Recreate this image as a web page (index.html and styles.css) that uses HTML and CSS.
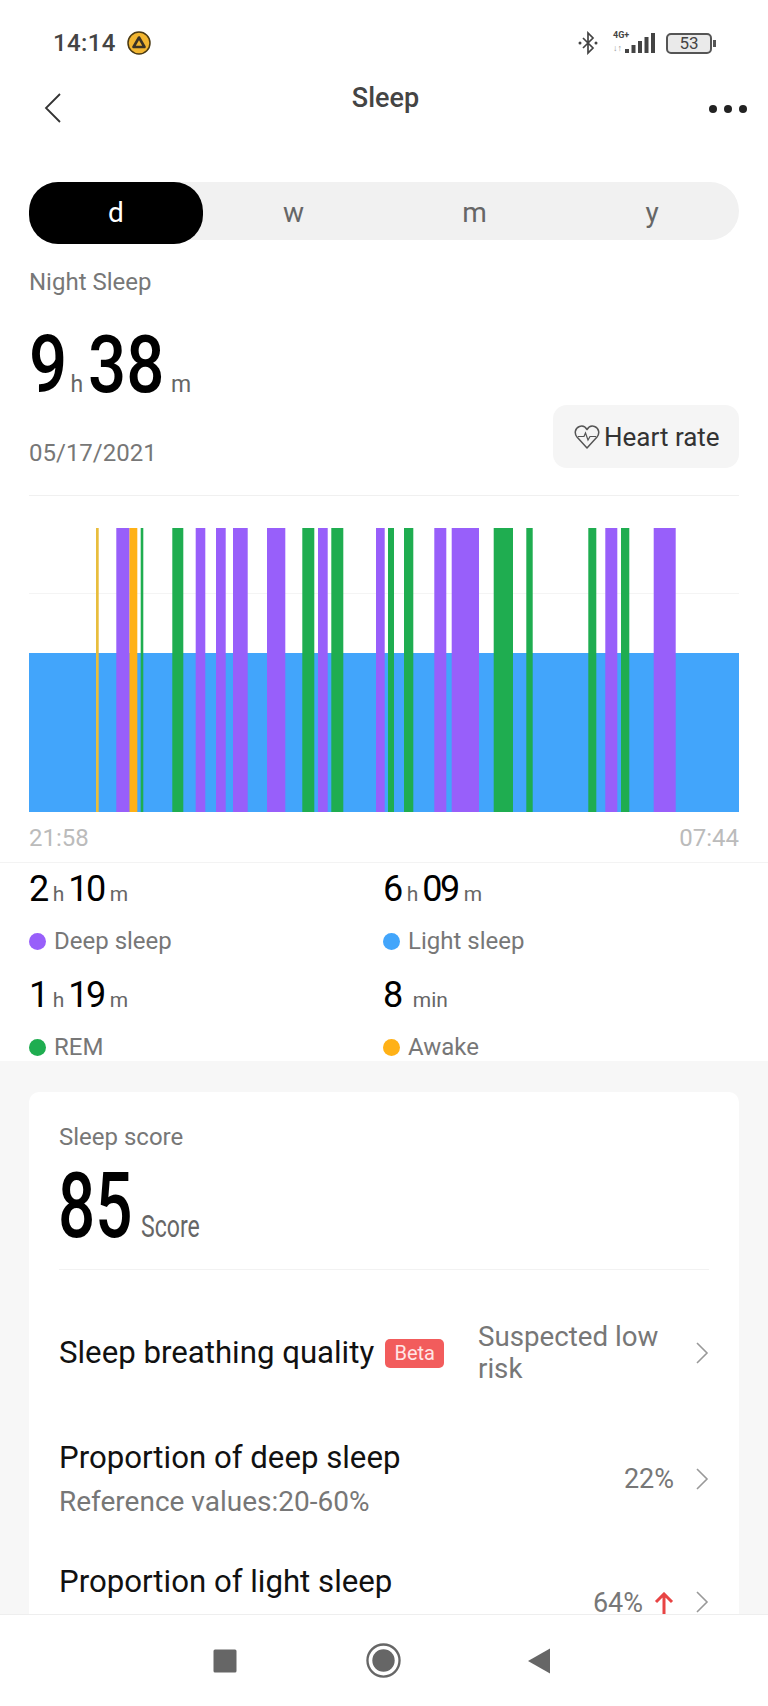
FILE: index.html
```html
<!DOCTYPE html>
<html>
  <head>
    <title>Sleep</title>
    <link rel="stylesheet" href="styles.css">
  </head>
  <body>
    <div class="phone">
      <div class="content">
        <div class="status-bar">
          <span class="clock">14:14</span>
          <svg class="app-badge" width="24" height="24" viewBox="0 0 24 24">
            <circle cx="12" cy="12" r="11" fill="#f2b632" stroke="#4a3a14" stroke-width="1.5"/>
            <path d="M12 6.500L17.500 16H6.500Z" fill="none" stroke="#3a3226" stroke-width="2.600" stroke-linejoin="round"/>
          </svg>
          <div class="status-icons">
            <svg width="20" height="24" viewBox="0 0 20 24">
              <path d="M5 7l10 10-5 5V2l5 5L5 17" fill="none" stroke="#444" stroke-width="1.700"/>
              <circle cx="2" cy="12" r="1.500" fill="#444"/>
              <circle cx="18" cy="12" r="1.500" fill="#444"/>
            </svg>
            <div class="signal">
              <span class="net-type">4G+</span>
              <span class="net-arrows">↓↑</span>
              <svg class="bars" width="30" height="20" viewBox="0 0 30 20">
                <rect x="0" y="16" width="4" height="4" fill="#444"/>
                <rect x="6.500" y="12" width="4" height="8" fill="#444"/>
                <rect x="13" y="8" width="4" height="12" fill="#444"/>
                <rect x="19.500" y="4" width="4" height="16" fill="#444"/>
                <rect x="26" y="0" width="4" height="20" fill="#444"/>
              </svg>
            </div>
            <div class="battery">
              <div class="battery-body">53</div>
              <div class="battery-tip"></div>
            </div>
          </div>
        </div>

        <div class="topbar">
          <svg class="back" width="18" height="30" viewBox="0 0 18 30">
            <path d="M16 1L2 15l14 14" fill="none" stroke="#333" stroke-width="1.800"/>
          </svg>
          <h1 class="title">Sleep</h1>
          <div class="more"><i></i><i></i><i></i></div>
        </div>

        <div class="tabs">
          <span class="tab active">d</span>
          <span class="tab">w</span>
          <span class="tab">m</span>
          <span class="tab">y</span>
        </div>

        <div class="summary">
          <div class="label">Night Sleep</div>
          <div class="total">
            <span class="total-num nine">9</span><span class="total-unit">h</span><span class="total-num thirty">38</span><span class="total-unit">m</span>
          </div>
          <div class="date-row">
            <span class="label">05/17/2021</span>
            <div class="heart-btn">
              <svg width="26" height="24" viewBox="0 0 26 24">
                <path d="M13 23L3 12C0 8.500 1 3 5.500 1.500 8.500.5 11.500 2 13 4.500 14.500 2 17.500.5 20.500 1.500 25 3 26 8.500 23 12Z" fill="none" stroke="#555" stroke-width="1.500" stroke-linejoin="round"/>
                <path d="M4 11.500h6l1.500-3.500 2.500 7 2-3.500h6" fill="none" stroke="#555" stroke-width="1.200"/>
              </svg>
              <span>Heart rate</span>
            </div>
          </div>
        </div>

        <div class="rule"></div>

        <svg class="chart" width="710" height="316" viewBox="29 496 710 316">
          <rect x="29" y="593" width="710" height="1" fill="#f4f4f4"/>
          <rect x="29" y="653" width="710" height="159" fill="#42a5fb"/>
          <g fill="#e8bd3c">
            <rect x="96" y="528" width="2.700" height="284"/>
          </g>
          <g fill="#ffb116">
            <rect x="129.300" y="528" width="8" height="284"/>
          </g>
          <g fill="#985ffa">
            <rect x="116.300" y="528" width="13" height="284"/>
            <rect x="195.700" y="528" width="9.600" height="284"/>
            <rect x="216" y="528" width="9.700" height="284"/>
            <rect x="233" y="528" width="14.700" height="284"/>
            <rect x="267" y="528" width="18.300" height="284"/>
            <rect x="318" y="528" width="9.700" height="284"/>
            <rect x="376" y="528" width="8.700" height="284"/>
            <rect x="434.300" y="528" width="12" height="284"/>
            <rect x="451.700" y="528" width="27.300" height="284"/>
            <rect x="605.300" y="528" width="12" height="284"/>
            <rect x="653.700" y="528" width="22" height="284"/>
          </g>
          <g fill="#1fad50">
            <rect x="140.700" y="528" width="2.600" height="284"/>
            <rect x="172.300" y="528" width="11" height="284"/>
            <rect x="302.300" y="528" width="12" height="284"/>
            <rect x="331.300" y="528" width="12" height="284"/>
            <rect x="388" y="528" width="6" height="284"/>
            <rect x="404" y="528" width="9.300" height="284"/>
            <rect x="493.700" y="528" width="19.300" height="284"/>
            <rect x="526.300" y="528" width="6.400" height="284"/>
            <rect x="588.300" y="528" width="8" height="284"/>
            <rect x="621" y="528" width="8.300" height="284"/>
          </g>
        </svg>
        <div class="chart-times">
          <span>21:58</span>
          <span>07:44</span>
        </div>

        <div class="stats">
          <div class="stat">
            <div class="stat-value"><b>2</b><span>h</span><b>10</b><span>m</span></div>
            <div class="stat-name"><i class="dot deep"></i>Deep sleep</div>
          </div>
          <div class="stat">
            <div class="stat-value"><b>6</b><span>h</span><b>09</b><span>m</span></div>
            <div class="stat-name"><i class="dot light"></i>Light sleep</div>
          </div>
          <div class="stat">
            <div class="stat-value"><b>1</b><span>h</span><b>19</b><span>m</span></div>
            <div class="stat-name"><i class="dot rem"></i>REM</div>
          </div>
          <div class="stat">
            <div class="stat-value"><b>8</b><span class="min">min</span></div>
            <div class="stat-name"><i class="dot awake"></i>Awake</div>
          </div>
        </div>

        <div class="lower">
          <div class="card">
            <div class="label">Sleep score</div>
            <div class="score">
              <span class="score-num">85</span>
              <span class="score-unit">Score</span>
            </div>
            <div class="card-rule"></div>

            <div class="row first">
              <div class="row-main">
                <span class="row-title">Sleep breathing quality</span>
                <span class="beta">Beta</span>
              </div>
              <div class="row-value wide">Suspected low risk</div>
              <svg class="chevron" width="14" height="24" viewBox="0 0 14 24">
                <path d="M2 2l10 10L2 22" fill="none" stroke="#999" stroke-width="1.600"/>
              </svg>
            </div>

            <div class="row">
              <div>
                <div class="row-title">Proportion of deep sleep</div>
                <div class="row-sub">Reference values:20-60%</div>
              </div>
              <div class="row-value">22%</div>
              <svg class="chevron" width="14" height="24" viewBox="0 0 14 24">
                <path d="M2 2l10 10L2 22" fill="none" stroke="#999" stroke-width="1.600"/>
              </svg>
            </div>

            <div class="row last">
              <div class="row-title">Proportion of light sleep</div>
              <div class="row-value">64%</div>
              <svg class="arrow-up" width="20" height="22" viewBox="0 0 20 22">
                <path d="M10 22V2M2 10l8-8 8 8" fill="none" stroke="#e84444" stroke-width="3"/>
              </svg>
              <svg class="chevron" width="14" height="24" viewBox="0 0 14 24">
                <path d="M2 2l10 10L2 22" fill="none" stroke="#999" stroke-width="1.600"/>
              </svg>
            </div>
          </div>
        </div>
      </div>

      <div class="navbar">
        <svg width="24" height="24" viewBox="0 0 24 24">
          <rect x="0.500" y="0.500" width="23" height="23" rx="1.500" fill="#666"/>
        </svg>
        <svg width="35" height="35" viewBox="0 0 36 36">
          <circle cx="18" cy="18" r="16.500" fill="none" stroke="#666" stroke-width="2.400"/>
          <circle cx="18" cy="18" r="11.500" fill="#666"/>
        </svg>
        <svg class="nav-back" width="24" height="26" viewBox="0 0 24 26">
          <path d="M23 0.500V25.500L1 13Z" fill="#666"/>
        </svg>
      </div>
    </div>
  </body>
</html>
```

FILE: styles.css
```css
/* Page */
* {
  box-sizing: border-box;
}

body {
  margin: 0;
  background-color: #fff;
  font-family: Roboto, "Noto Sans", sans-serif;
  color: #777;
}

.phone {
  width: 768px;
  height: 1706px;
  display: flex;
  flex-direction: column;
  overflow: hidden;
}

.content {
  flex: 1;
  min-height: 0;
}

/* Status bar */
.status-bar {
  height: 80px;
  padding: 6px 52px 0 53px;
  display: flex;
  align-items: center;
}

.clock {
  font-size: 24px;
  font-weight: 500;
  color: #444;
  letter-spacing: 0.4px;
}

.app-badge {
  margin-left: 11px;
}

.status-icons {
  margin-left: auto;
  display: flex;
  align-items: center;
}

.signal {
  position: relative;
  width: 42px;
  height: 22px;
  margin-left: 15px;
}

.net-type {
  position: absolute;
  left: 0;
  top: -2px;
  font-size: 9px;
  font-weight: 700;
  color: #444;
}

.net-arrows {
  position: absolute;
  left: 0;
  top: 11px;
  font-size: 9px;
  color: #999;
}

.bars {
  position: absolute;
  right: 0;
  top: 1px;
}

.battery {
  display: flex;
  align-items: center;
  margin-left: 11px;
}

.battery-body {
  width: 46px;
  height: 21px;
  border: 2px solid #555;
  border-radius: 5px;
  background-color: #eaeaea;
  font-size: 17px;
  line-height: 17px;
  text-align: center;
  color: #444;
}

.battery-tip {
  width: 3px;
  height: 7px;
  margin-left: 1px;
  background-color: #555;
}

/* Top bar */
.topbar {
  height: 102px;
  display: flex;
  justify-content: space-between;
  align-items: flex-start;
  padding: 0 21px 0 44px;
}

.back {
  margin-top: 13px;
}

.title {
  margin: 0;
  flex: 1;
  font-size: 27px;
  font-weight: 500;
  line-height: 36px;
  text-align: center;
  color: #444;
}

.more {
  display: flex;
  gap: 7px;
  margin-top: 25px;
}

.more i {
  width: 8px;
  height: 8px;
  border-radius: 50%;
  background-color: #222;
}

/* Day / week / month / year */
.tabs {
  height: 58px;
  margin: 0 29px;
  display: grid;
  grid-template-columns: 174px 181px 181px 174px;
  border-radius: 29px;
  background-color: #f1f1f1;
}

.tab {
  font-size: 28px;
  line-height: 62px;
  text-align: center;
  color: #666;
}

.tab.active {
  border-radius: 29px;
  background-color: #000;
  color: #fff;
}

/* Night sleep summary */
.summary {
  margin: 27px 29px 0;
}

.label {
  font-size: 24px;
  line-height: 30px;
  color: #777;
}

.total {
  height: 80px;
  margin-top: 28px;
  display: flex;
  align-items: baseline;
}

.total-num {
  display: inline-block;
  font-size: 80px;
  font-weight: 500;
  line-height: 80px;
  color: #000;
  transform: scaleX(0.84);
  transform-origin: left;
}

.total-num.nine {
  margin-right: -3px;
}

.total-num.thirty {
  margin-right: -7px;
}

.total-unit {
  font-size: 23px;
  color: #666;
  margin-right: 5px;
  margin-left: -1px;
}

.date-row {
  height: 63px;
  display: flex;
  justify-content: space-between;
  align-items: flex-end;
}

.heart-btn {
  width: 186px;
  height: 63px;
  display: flex;
  align-items: center;
  gap: 4px;
  padding-left: 21px;
  border-radius: 14px;
  background-color: #f5f5f5;
  font-size: 26px;
  color: #333;
}

.rule {
  height: 1px;
  margin: 27px 29px 0;
  background-color: #f0f0f0;
}

/* Chart */
.chart {
  display: block;
  margin-left: 29px;
}

.chart-times {
  height: 30px;
  margin: 11px 29px 0;
  display: flex;
  justify-content: space-between;
  font-size: 24px;
  line-height: 30px;
  color: #bbb;
}

/* Stage totals */
.stats {
  height: 199px;
  margin-top: 9px;
  padding: 8px 0 0 29px;
  display: grid;
  grid-template-columns: 354px 1fr;
  align-content: start;
  row-gap: 21px;
  overflow: hidden;
  border-top: 1px solid #f3f3f3;
}

.stat-value {
  display: flex;
  align-items: baseline;
  height: 36px;
}

.stat-value b {
  font-size: 36px;
  font-weight: 400;
  line-height: 36px;
  letter-spacing: -2.500px;
  color: #000;
}

.stat-value span {
  margin: 0 4px 0 6px;
  font-size: 21px;
  color: #666;
}

.stat-value .min {
  margin-left: 12px;
}

.stat-name {
  margin-top: 19px;
  display: flex;
  align-items: center;
  font-size: 24px;
  line-height: 30px;
  color: #777;
}

.dot {
  width: 17px;
  height: 17px;
  margin-right: 8px;
  border-radius: 50%;
}

.dot.deep {
  background-color: #985ffa;
}

.dot.light {
  background-color: #42a5fb;
}

.dot.rem {
  background-color: #1fad50;
}

.dot.awake {
  background-color: #ffb116;
}

/* Score card */
.lower {
  padding: 31px 29px 0;
  background-color: #f7f7f7;
}

.card {
  padding: 30px 30px 0;
  border-radius: 10px 10px 0 0;
  background-color: #fff;
}

.score {
  display: flex;
  align-items: baseline;
  margin-top: 9px;
  margin-left: -1px;
  height: 91px;
}

.score-num {
  display: inline-block;
  font-size: 91px;
  font-weight: 500;
  line-height: 91px;
  color: #000;
  transform: scaleX(0.72);
  transform-origin: left;
  margin-right: -20px;
}

.score-unit {
  display: inline-block;
  font-size: 32px;
  color: #666;
  transform: scaleX(0.72);
  transform-origin: left;
}

.card-rule {
  height: 1px;
  margin: 17px 0 20px;
  background-color: #f2f2f2;
}

.row {
  height: 125px;
  display: flex;
  align-items: center;
}

.row.first {
  height: 126px;
}

.row-main {
  display: flex;
  align-items: center;
}

.row-title {
  font-size: 31.200px;
  line-height: 36px;
  color: #111;
}

.row-sub {
  margin-top: 11px;
  font-size: 28px;
  line-height: 30px;
  color: #777;
}

.beta {
  margin-left: 11px;
  width: 59px;
  height: 29px;
  border-radius: 5px;
  background-color: #f25c5c;
  font-size: 20px;
  line-height: 29px;
  text-align: center;
  color: #ffe5e5;
}

.row-value {
  margin-left: auto;
  font-size: 27px;
  line-height: 32px;
  color: #777;
}

.row-value.wide {
  width: 211px;
  font-size: 27.700px;
}

.arrow-up {
  margin-left: 11px;
}

.chevron {
  margin-left: 21px;
  flex-shrink: 0;
}

.row-value.wide + .chevron {
  margin-left: 6px;
}

/* last row runs under the navigation bar */
.row.last {
  height: 73px;
  align-items: flex-start;
}

.row.last .row-title {
  margin-top: 23px;
}

.row.last .row-value {
  margin-top: 51px;
  line-height: 22px;
}

.row.last .arrow-up {
  margin-top: 51px;
}

.row.last .chevron {
  margin-top: 49px;
}

/* Navigation bar */
.navbar {
  height: 92px;
  padding-right: 4px;
  display: flex;
  justify-content: center;
  align-items: center;
  gap: 129px;
  border-top: 1px solid #eee;
  background-color: #fff;
}

.nav-back {
  margin-left: -3px;
}
```
